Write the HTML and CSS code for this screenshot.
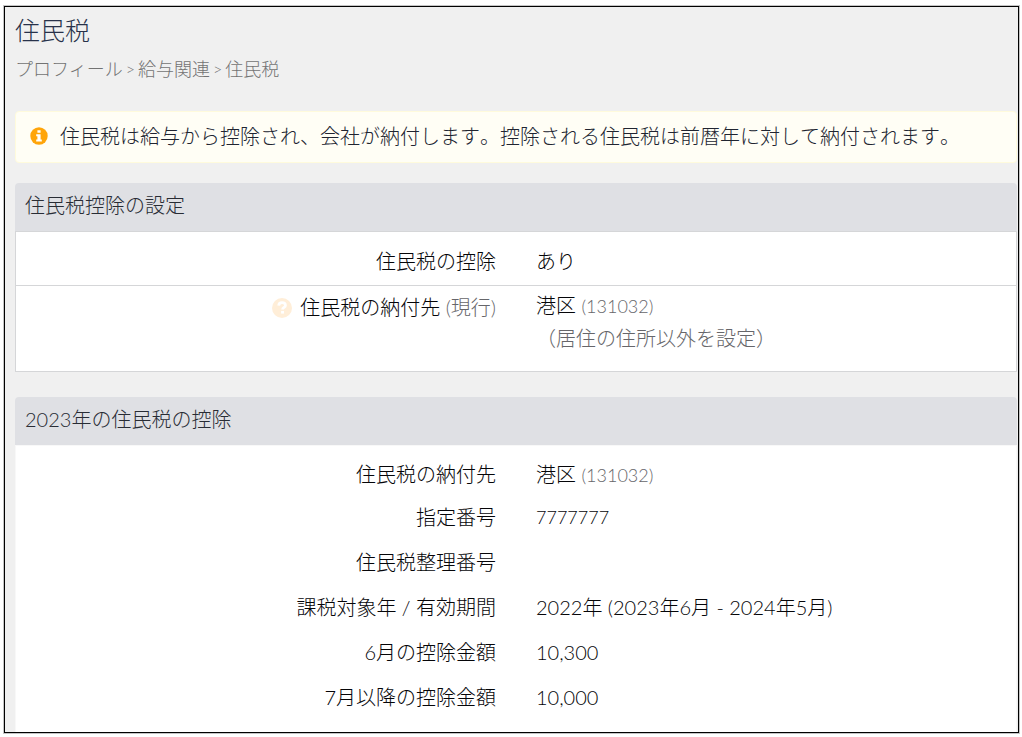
FILE: index.html
```html
<!DOCTYPE html>
<html lang="ja">
<head>
<meta charset="utf-8">
<title>住民税</title>
<link rel="stylesheet" href="styles.css">
</head>
<body>
<main class="frame">
  <h1 class="title">住民税</h1>
  <nav class="crumbs" aria-label="パンくず">
    <span>プロフィール</span><span class="sep">&gt;</span><span>給与関連</span><span class="sep">&gt;</span><span>住民税</span>
  </nav>

  <div class="notice">
    <svg class="notice-icon" viewBox="0 0 18 18" aria-hidden="true">
      <circle cx="9" cy="9" r="8.7" fill="#ffa50a"/>
      <path d="M7.4 3.2h3.2v2.5H7.4zM6.2 7.3h4.4v5.3h1.2v2H6.2v-2h1.2V9.3H6.2z" fill="#fff"/>
    </svg>
    <p class="notice-text">住民税は給与から控除され、会社が納付します。控除される住民税は前暦年に対して納付されます。</p>
  </div>

  <section class="panel">
    <h2 class="panel-head">住民税控除の設定</h2>
    <dl class="panel-body lined">
      <div class="row">
        <dt>住民税の控除</dt>
        <dd>あり</dd>
      </div>
      <div class="row payee">
        <dt>
          <svg class="help" viewBox="0 0 20 20" aria-hidden="true">
            <circle cx="10" cy="10" r="10" fill="#ffeed8"/>
            <path d="M6.700 7.600C6.800 5.700 8.100 4.700 10 4.700c2 0 3.400 1 3.400 2.700 0 2-2.800 2.100-2.800 4.200" fill="none" stroke="#fff" stroke-width="2.800"/>
            <path d="M9.100 12.900h2.900v2.700H9.100z" fill="#fff"/>
          </svg>住民税の納付先 <span class="muted">(現行)</span>
        </dt>
        <dd>港区 <span class="muted code">(131032)</span><br><span class="muted">（居住の住所以外を設定）</span></dd>
      </div>
    </dl>
  </section>

  <section class="panel grow">
    <h2 class="panel-head">2023年の住民税の控除</h2>
    <dl class="panel-body plain">
      <div class="row tight"><dt>住民税の納付先</dt><dd>港区 <span class="muted code">(131032)</span></dd></div>
      <div class="row"><dt>指定番号</dt><dd class="code">7777777</dd></div>
      <div class="row"><dt>住民税整理番号</dt><dd></dd></div>
      <div class="row"><dt>課税対象年 / 有効期間</dt><dd>2022年 (2023年6月 - 2024年5月)</dd></div>
      <div class="row"><dt>6月の控除金額</dt><dd>10,300</dd></div>
      <div class="row"><dt>7月以降の控除金額</dt><dd>10,000</dd></div>
    </dl>
  </section>
</main>
</body>
</html>
```
FILE: styles.css
```css
* {
  box-sizing: border-box;
}

body {
  margin: 0;
  padding: 6px 3px 4px 4px;
  min-height: 100vh;
  display: flex;
  background: #fff;
  color: #050508;
  font: 300 20px/32px Lato, "Noto Sans CJK JP", sans-serif;
}

.frame {
  flex: 1;
  display: flex;
  flex-direction: column;
  padding: 7px 1px 0 10px;
  border: 1px solid #000;
  box-shadow: 0 0 0 1px #c4c4c4;
  background: #f0f0f0;
}

h1, h2, p, dl, dd {
  margin: 0;
  font-weight: 300;
}

.title {
  color: #28324a;
  font-size: 25px;
  line-height: 32px;
}

.crumbs {
  display: flex;
  margin-top: 10px;
  color: #737373;
  font-size: 18px;
  line-height: 26px;
}

.sep {
  padding: 0 3px;
  font-size: 16px;
}

.notice {
  display: flex;
  align-items: center;
  gap: 12px;
  margin: 29px 0 20px;
  padding: 8px 14px 10px;
  border: 1px solid #fffbdc;
  border-radius: 4px;
  background: #fffef5;
  color: #202430;
}

.notice-icon {
  flex: none;
  width: 18px;
  height: 18px;
}

.notice-text {
  font-kerning: none;
}

.panel-head {
  padding: 6px 10px 10px;
  border-radius: 4px 4px 0 0;
  background: #dfe0e4;
  color: #282c34;
  font-size: 20px;
  line-height: 32px;
}

.panel-body {
  background: #fff;
}

.row {
  display: grid;
  grid-template-columns: 1fr 1fr;
  column-gap: 40px;
}

dt {
  text-align: right;
}

.lined {
  border: 1px solid #d5d6d8;
}

.lined .row {
  padding: 13px 0 8px;
}

.lined .payee {
  padding: 3px 0 17px;
  border-top: 1px solid #d5d6d8;
}

.payee dt {
  padding-top: 2px;
}

.help {
  width: 20px;
  height: 20px;
  margin-right: 8px;
  vertical-align: -3px;
}

.muted {
  color: #66666a;
}

.code {
  font-size: 18px;
}

.grow {
  flex: 1;
  display: flex;
  flex-direction: column;
  margin-top: 25px;
}

.plain {
  flex: 1;
  display: flex;
  flex-direction: column;
  gap: 13px;
  padding: 15px 0;
  border: 1px solid #f8f8f8;
  border-bottom: 0;
}

.tight {
  line-height: 26px;
}
```
